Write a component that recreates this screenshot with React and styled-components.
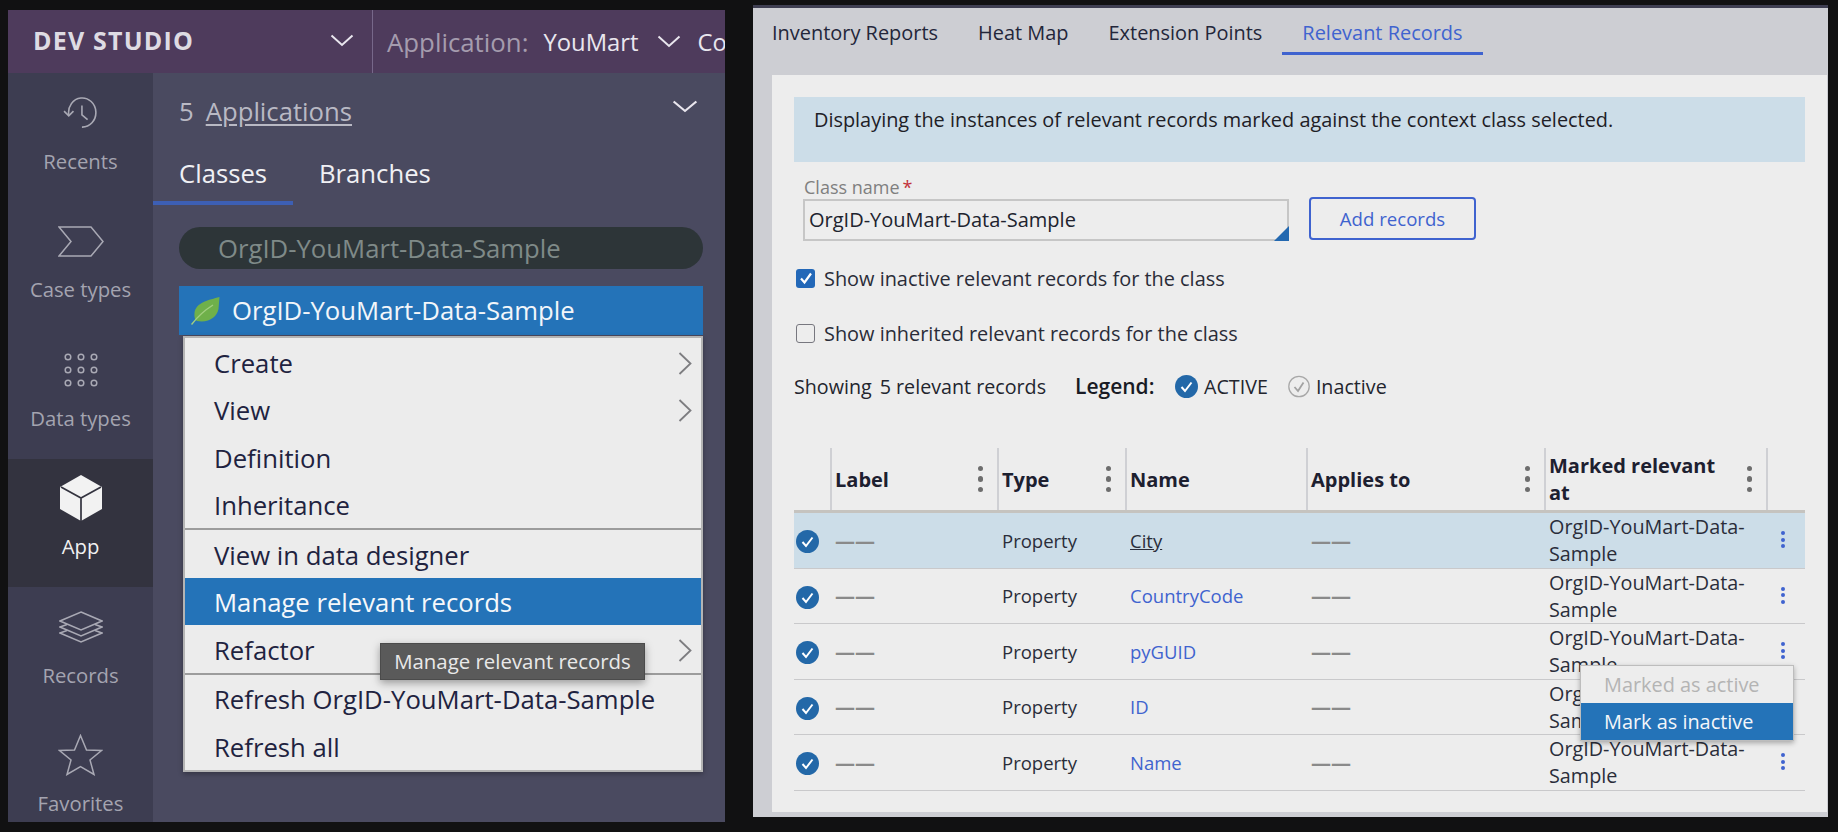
import React from 'react';
import styled, { createGlobalStyle } from 'styled-components';

const Global = createGlobalStyle`
  html, body { margin: 0; padding: 0; background: #111112; width: 1838px; height: 832px; overflow: hidden; }
  * { box-sizing: border-box; }
  #root { font-family: "Open Sans", "Liberation Sans", sans-serif; }
`;

const Page = styled.div`
  display: flex;
  align-items: flex-start;
  gap: 28px;
  padding: 5px 0 0 8px;
  width: 1838px;
  height: 832px;
`;

/* Left: dev studio */
const Studio = styled.section`
  width: 717px;
  height: 812px;
  margin-top: 5px;
  background: #4a4a60;
  display: flex;
  flex-direction: column;
  overflow: hidden;
`;
const TopBar = styled.header`
  height: 63px;
  flex: none;
  background: #4e3b5c;
  display: flex;
  align-items: center;
  color: #e6e3ea;
  white-space: nowrap;
  overflow: hidden;
`;
const Brand = styled.div`
  width: 365px;
  height: 100%;
  flex: none;
  padding: 0 18px 3px 25px;
  display: flex;
  align-items: center;
  justify-content: space-between;
  border-right: 1px solid #77688a;
  font-size: 25px;
  font-weight: 700;
  letter-spacing: 1.2px;
  color: #dedbe3;
`;
const AppLabel = styled.span`
  margin-left: 14px;
  font-size: 25.8px;
  color: #a59cae;
`;
const AppName = styled.span`
  margin-left: 15px;
  font-size: 23.8px;
  color: #e9e6ee;
`;
const AppChevron = styled.span`
  display: flex;
  margin: 0 16px 0 19px;
`;
const AppCrumb = styled.span`
  font-size: 23.8px;
  color: #e9e6ee;
`;
const Body = styled.div`
  flex: 1;
  display: flex;
  min-height: 0;
`;
const Rail = styled.nav`
  width: 145px;
  flex: none;
  background: #3d3d51;
  display: flex;
  flex-direction: column;
`;
const RailItem = styled.div`
  height: 128.6px;
  flex: none;
  display: flex;
  flex-direction: column;
  align-items: center;
  background: ${p => (p.$active ? '#33333f' : 'transparent')};
  color: ${p => (p.$active ? '#f2f2f2' : '#a4a4b0')};
  font-size: 20.3px;
  line-height: 24px;
`;
const RailIcon = styled.div`
  height: 79px;
  margin-bottom: -3.5px;
  display: flex;
  align-items: center;
  justify-content: center;
  flex: none;
`;
const Explorer = styled.div`
  flex: 1;
  padding: 0 22px 0 26px;
  min-width: 0;
`;
const AppsRow = styled.div`
  height: 66px;
  display: flex;
  align-items: center;
  justify-content: space-between;
  padding-right: 5px;
  color: #b9b9c4;
  font-size: 25.7px;
`;
const AppsCount = styled.span`
  margin-right: 12px;
`;
const AppsLink = styled.a`
  text-decoration: underline;
  text-underline-offset: 3px;
`;
const AppsTitle = styled.div`
  display: flex;
  align-items: center;
  padding-top: 11px;
`;
const PanelTabs = styled.div`
  display: flex;
  margin-left: -26px;
  height: 66px;
`;
const PanelTab = styled.div`
  padding: 17px 0 0 26px;
  width: ${p => p.$w}px;
  font-size: 25.7px;
  line-height: 36px;
  color: #f0f0f4;
  border-bottom: ${p => (p.$active ? '4px solid #3d5fb4' : 'none')};
  height: 66px;
`;
const SearchPill = styled.div`
  height: 42px;
  margin-top: 22px;
  border-radius: 21px;
  background: #2d3538;
  color: #7f8a88;
  font-size: 25.7px;
  line-height: 44px;
  padding-left: 39px;
`;
const ClassRow = styled.div`
  height: 49px;
  margin-top: 17px;
  background: #2473b8;
  color: #f2f6fa;
  display: flex;
  align-items: center;
  font-size: 25.7px;
  padding-left: 12px;
  gap: 12px;
`;
const ContextMenu = styled.div`
  position: relative;
  margin: 1px 0 0 4px;
  background: #ececec;
  border: 2px solid #b4b4b4;
  box-shadow: 0 2px 5px rgba(0,0,0,.3);
`;
const MenuGroup = styled.div`
  border-bottom: ${p => (p.$last ? 'none' : '2px solid #9c9c9c')};
`;
const MenuItem = styled.div`
  height: 47.5px;
  padding: 3px 9px 0 29px;
  display: flex;
  align-items: center;
  justify-content: space-between;
  font-size: 25.7px;
  color: ${p => (p.$active ? '#f5f8fb' : '#1f2340')};
  background: ${p => (p.$active ? '#2473b8' : 'transparent')};
`;
const Tooltip = styled.div`
  position: absolute;
  left: 195px;
  top: 305px;
  width: 265px;
  height: 37px;
  background: #5a5a5a;
  color: #e9e9e9;
  font-size: 20.4px;
  line-height: 35px;
  text-align: center;
  border: 1px solid #4b4b4b;
  box-shadow: 0 3px 8px rgba(0,0,0,.35);
  white-space: nowrap;
`;

/* Right: relevant records */
const Landing = styled.section`
  width: 1075px;
  height: 812px;
  background: #cdced3;
  border-top: 3px solid #3f3f52;
  display: flex;
  flex-direction: column;
`;
const LandingTabs = styled.div`
  height: 67px;
  flex: none;
  padding-left: 19px;
  display: flex;
  gap: 40px;
`;
const LandingTab = styled.div`
  position: relative;
  height: 47px;
  line-height: 50px;
  font-size: 19.95px;
  color: ${p => (p.$active ? '#3f63cf' : '#23263a')};
  ${p => p.$active && `
    &::after {
      content: '';
      position: absolute;
      left: -20px;
      right: -20px;
      bottom: 0;
      height: 3px;
      background: #3f63cf;
    }
  `}
`;
const Card = styled.div`
  width: 1055px;
  height: 737px;
  margin-left: 19px;
  background: #ededed;
  padding: 22px 22px 0;
`;
const Notice = styled.div`
  height: 65px;
  background: #ccdde8;
  padding: 9px 20px;
  font-size: 19.9px;
  line-height: 28px;
  color: #1e2026;
`;
const FormRow = styled.div`
  display: flex;
  align-items: flex-end;
  gap: 20px;
  padding-left: 9px;
  margin-top: 13px;
`;
const Field = styled.div`
  width: 486px;
  flex: none;
`;
const FieldLabel = styled.div`
  height: 24px;
  line-height: 24px;
  font-size: 18px;
  color: #7f7f7f;
  padding-left: 1px;
`;
const Star = styled.span`
  color: #c2323a;
  margin-left: 3px;
`;
const FieldInput = styled.div`
  position: relative;
  height: 42px;
  border: 2px solid #c6c6c6;
  padding-left: 4px;
  font-size: 20px;
  line-height: 38px;
  color: #20232e;
  &::after {
    content: '';
    position: absolute;
    right: -2px;
    bottom: -2px;
    border-style: solid;
    border-width: 0 0 15px 15px;
    border-color: transparent transparent #2368b0 transparent;
  }
`;
const OutlineButton = styled.button`
  width: 167px;
  height: 43px;
  margin-bottom: 1px;
  border: 2px solid #3f63cf;
  border-radius: 4px;
  background: transparent;
  color: #3f63cf;
  font: 18.6px "Open Sans", sans-serif;
`;
const CheckRow = styled.label`
  display: flex;
  align-items: center;
  gap: 9px;
  height: 24px;
  margin: ${p => p.$m}px 0 0 2px;
  font-size: 19.9px;
  color: #2a2c38;
`;
const Box = styled.span`
  width: 19px;
  height: 19px;
  flex: none;
  border-radius: 3px;
  display: flex;
  align-items: center;
  justify-content: center;
  background: ${p => (p.$on ? '#2368b8' : 'transparent')};
  border: ${p => (p.$on ? 'none' : '1.5px solid #77777f')};
`;
const StatusRow = styled.div`
  display: flex;
  align-items: center;
  height: 28px;
  margin-top: 27px;
  font-size: 19.7px;
  color: #23252e;
`;
const ShowCount = styled.span`
  width: 281px;
  flex: none;
`;
const ShowNumber = styled.span`
  margin-left: 8px;
`;
const LegendTitle = styled.b`
  width: 100px;
  flex: none;
  font-weight: 600;
  color: #191b24;
  font-size: 21px;
`;
const LegendEntry = styled.span`
  display: flex;
  align-items: center;
  gap: 6px;
  margin-right: 20px;
`;
const Table = styled.div`
  position: relative;
  margin-top: 48px;
  width: 1011px;
`;
const Row = styled.div`
  display: grid;
  grid-template-columns: 36px 167px 128px 181px 238px 222px 39px;
  height: ${p => (p.$head ? '65px' : '55.5px')};
  border-bottom: ${p => (p.$head ? '3px solid #c5c3bf' : '1.5px solid #c9c9cb')};
  background: ${p => (p.$hl ? '#ccdde8' : 'transparent')};
`;
const HeadCell = styled.div`
  border-left: ${p => (p.$first ? 'none' : '2px solid #cfd0d4')};
  display: flex;
  align-items: center;
  justify-content: space-between;
  padding: 0 14px 0 3px;
  font-size: 20px;
  line-height: 27px;
  font-weight: 700;
  color: #1d2030;
`;
const HeadTitle = styled.span`
  max-width: 178px;
`;
const Cell = styled.div`
  display: flex;
  align-items: center;
  padding-left: 5px;
  font-size: ${p => p.$size || 18.5}px;
  line-height: 27px;
  color: #2a2d3a;
  min-width: 0;
`;
const CheckCell = styled(Cell)`
  padding-left: 2px;
  padding-top: 3px;
`;
const Dash = styled.span`
  color: #8a8a8a;
  font-size: 20px;
  font-weight: 700;
`;
const NameLink = styled.a`
  color: ${p => (p.$hover ? '#2a2d3a' : '#3f63cf')};
  text-decoration: ${p => (p.$hover ? 'underline' : 'none')};
`;
const ColumnDots = styled.span`
  display: flex;
  flex-direction: column;
  gap: 5px;
  flex: none;
  & > i {
    width: 5.5px;
    height: 5.5px;
    border-radius: 50%;
    background: #6d6d6d;
  }
`;
const RowDots = styled.span`
  display: flex;
  flex-direction: column;
  gap: 2.5px;
  margin: -1px 0 0 10px;
  & > i {
    width: 4px;
    height: 4px;
    border-radius: 50%;
    background: #3f63cf;
  }
`;
const RowMenu = styled.div`
  position: absolute;
  left: 786px;
  top: 217px;
  width: 214px;
  height: 76px;
  background: #ededed;
  border: 1.5px solid #bdbdbd;
  box-shadow: 0 2px 5px rgba(0,0,0,.3);
  font-size: 19.9px;
`;
const RowMenuItem = styled.div`
  height: 37px;
  line-height: 38px;
  padding-left: 23px;
  color: ${p => (p.$active ? '#f4f7fa' : '#b4b4b4')};
  background: ${p => (p.$active ? '#2473b8' : 'transparent')};
`;

const Chevron = ({ w = 24, h = 13, color = '#e9e6ee' }) => (
  <svg width={w} height={h} viewBox="0 0 24 13" fill="none" preserveAspectRatio="none">
    <path d="M1.5 1.5 L12 11 L22.5 1.5" stroke={color} strokeWidth="2" />
  </svg>
);
const ChevronRight = () => (
  <svg width="14" height="23" viewBox="0 0 14 23" fill="none">
    <path d="M1.5 1 L12.5 11.5 L1.5 22" stroke="#7d7d80" strokeWidth="1.8" />
  </svg>
);
const Recents = () => (
  <svg width="36" height="32" viewBox="0 0 38 34" fill="none" stroke="#a9a9b4" strokeWidth="1.7">
    <path d="M6 19 A14.5 15.5 0 1 1 20 32" />
    <path d="M1 15 L6 20 L11 15" />
    <path d="M20 9 V19 L26 24" />
  </svg>
);
const CaseIcon = () => (
  <svg width="46" height="31" viewBox="0 0 46 31" fill="none" stroke="#a9a9b4" strokeWidth="1.5">
    <path d="M1 1 H33 L45 15.5 L33 30 H1 L13 15.5 Z" />
  </svg>
);
const DataIcon = () => (
  <svg width="34" height="34" viewBox="0 0 34 34" fill="none" stroke="#a9a9b4" strokeWidth="1.5">
    {[4, 17, 30].map(y => [4, 17, 30].map(x => <circle key={`${x}-${y}`} cx={x} cy={y} r="2.8" />))}
  </svg>
);
const AppIcon = () => (
  <svg width="42" height="46" viewBox="0 0 42 46">
    <path d="M21 0 L42 12 V34 L21 46 L0 34 V12 Z" fill="#f2f2f2" />
    <path d="M1 12 L21 23 L41 12 M21 23 V46" stroke="#33333f" strokeWidth="1.7" fill="none" />
  </svg>
);
const RecordsIcon = () => (
  <svg width="44" height="32" viewBox="0 0 44 32" fill="none" stroke="#a9a9b4" strokeWidth="1.5">
    <path d="M22 1 L43 10 L22 19 L1 10 Z" />
    <path d="M8 13.5 L1 16 L22 25 L43 16 L36 13.5" />
    <path d="M8 19.5 L1 22 L22 31 L43 22 L36 19.5" />
  </svg>
);
const StarIcon = () => (
  <svg width="45" height="42" viewBox="0 0 45 42" fill="none" stroke="#a9a9b4" strokeWidth="1.5">
    <path d="M22.5 1.5 L28.5 16 L43.5 16.5 L32 26 L36 40.5 L22.5 32.5 L9 40.5 L13 26 L1.5 16.5 L16.5 16 Z" />
  </svg>
);
const Leaf = () => (
  <svg width="29" height="28" viewBox="0 0 29 28">
    <path d="M28.5 0 C18 3 5 5 3.5 16 C3 20 4 23 6 24 C18 26 26 20 27.5 12 C28 8 28 4 28.5 0 Z" fill="#6fb04a" />
    <path d="M0.5 27.5 C7 19 14 13 22 8" stroke="#a3cf80" strokeWidth="1.4" fill="none" />
  </svg>
);
const BoxCheck = () => (
  <svg width="14" height="14" viewBox="0 0 14 14" fill="none">
    <path d="M2 7.5 L5.5 11.5 L12 2.5" stroke="#fff" strokeWidth="2.2" />
  </svg>
);
const ActiveBadge = ({ size = 23 }) => (
  <svg width={size} height={size} viewBox="0 0 23 23">
    <circle cx="11.5" cy="11.5" r="11.5" fill="#2368a8" />
    <path d="M6.5 12 L10 16 L16.5 7.5" stroke="#fff" strokeWidth="2" fill="none" />
  </svg>
);
const InactiveBadge = () => (
  <svg width="22" height="23" viewBox="0 0 22 23" fill="none">
    <circle cx="11" cy="11.5" r="10.2" stroke="#a8a8a8" strokeWidth="1.3" />
    <path d="M6.5 12 L10 16 L15.5 7.5" stroke="#a2a2a2" strokeWidth="1.8" />
  </svg>
);

const railItems = [
  ['Recents', <Recents key="r" />],
  ['Case types', <CaseIcon key="c" />],
  ['Data types', <DataIcon key="d" />],
  ['App', <AppIcon key="a" />, true],
  ['Records', <RecordsIcon key="rc" />],
  ['Favorites', <StarIcon key="s" />],
];

const names = ['City', 'CountryCode', 'pyGUID', 'ID', 'Name'];
const columns = [
  { t: 'Label', dots: true },
  { t: 'Type', dots: true },
  { t: 'Name' },
  { t: 'Applies to', dots: true },
  { t: 'Marked relevant at', dots: true },
];

const Dots3 = () => (
  <ColumnDots><i /><i /><i /></ColumnDots>
);

export default function App() {
  return (
    <>
      <Global />
      <Page>
        <Studio>
          <TopBar>
            <Brand>
              DEV STUDIO
              <Chevron />
            </Brand>
            <AppLabel>Application:</AppLabel>
            <AppName>YouMart</AppName>
            <AppChevron><Chevron /></AppChevron>
            <AppCrumb>Co</AppCrumb>
          </TopBar>
          <Body>
            <Rail>
              {railItems.map(([label, icon, active]) => (
                <RailItem key={label} $active={active}>
                  <RailIcon>{icon}</RailIcon>
                  {label}
                </RailItem>
              ))}
            </Rail>
            <Explorer>
              <AppsRow>
                <AppsTitle>
                  <AppsCount>5</AppsCount>
                  <AppsLink>Applications</AppsLink>
                </AppsTitle>
                <Chevron w={26} h={13} />
              </AppsRow>
              <PanelTabs>
                <PanelTab $w={140} $active>Classes</PanelTab>
                <PanelTab $w={165}>Branches</PanelTab>
              </PanelTabs>
              <SearchPill>OrgID-YouMart-Data-Sample</SearchPill>
              <ClassRow>
                <Leaf />
                OrgID-YouMart-Data-Sample
              </ClassRow>
              <ContextMenu>
                <MenuGroup>
                  <MenuItem>Create<ChevronRight /></MenuItem>
                  <MenuItem>View<ChevronRight /></MenuItem>
                  <MenuItem>Definition</MenuItem>
                  <MenuItem>Inheritance</MenuItem>
                </MenuGroup>
                <MenuGroup>
                  <MenuItem>View in data designer</MenuItem>
                  <MenuItem $active>Manage relevant records</MenuItem>
                  <MenuItem>Refactor<ChevronRight /></MenuItem>
                </MenuGroup>
                <MenuGroup $last>
                  <MenuItem>Refresh OrgID-YouMart-Data-Sample</MenuItem>
                  <MenuItem>Refresh all</MenuItem>
                </MenuGroup>
                <Tooltip>Manage relevant records</Tooltip>
              </ContextMenu>
            </Explorer>
          </Body>
        </Studio>

        <Landing>
          <LandingTabs>
            <LandingTab>Inventory Reports</LandingTab>
            <LandingTab>Heat Map</LandingTab>
            <LandingTab>Extension Points</LandingTab>
            <LandingTab $active>Relevant Records</LandingTab>
          </LandingTabs>
          <Card>
            <Notice>Displaying the instances of relevant records marked against the context class selected.</Notice>
            <FormRow>
              <Field>
                <FieldLabel>Class name<Star>*</Star></FieldLabel>
                <FieldInput>OrgID-YouMart-Data-Sample</FieldInput>
              </Field>
              <OutlineButton>Add records</OutlineButton>
            </FormRow>
            <CheckRow $m={25}><Box $on><BoxCheck /></Box>Show inactive relevant records for the class</CheckRow>
            <CheckRow $m={31}><Box />Show inherited relevant records for the class</CheckRow>
            <StatusRow>
              <ShowCount>Showing<ShowNumber>5 relevant records</ShowNumber></ShowCount>
              <LegendTitle>Legend:</LegendTitle>
              <LegendEntry><ActiveBadge />ACTIVE</LegendEntry>
              <LegendEntry><InactiveBadge />Inactive</LegendEntry>
            </StatusRow>
            <Table>
              <Row $head>
                <HeadCell $first />
                {columns.map(c => (
                  <HeadCell key={c.t}>
                    <HeadTitle>{c.t}</HeadTitle>
                    {c.dots && <Dots3 />}
                  </HeadCell>
                ))}
                <HeadCell />
              </Row>
              {names.map((n, i) => (
                <Row key={n} $hl={i === 0}>
                  <CheckCell><ActiveBadge /></CheckCell>
                  <Cell><Dash>——</Dash></Cell>
                  <Cell>Property</Cell>
                  <Cell><NameLink $hover={i === 0}>{n}</NameLink></Cell>
                  <Cell><Dash>——</Dash></Cell>
                  <Cell $size={19.8}>OrgID-YouMart-Data-Sample</Cell>
                  <Cell><RowDots><i /><i /><i /></RowDots></Cell>
                </Row>
              ))}
              <RowMenu>
                <RowMenuItem>Marked as active</RowMenuItem>
                <RowMenuItem $active>Mark as inactive</RowMenuItem>
              </RowMenu>
            </Table>
          </Card>
        </Landing>
      </Page>
    </>
  );
}
